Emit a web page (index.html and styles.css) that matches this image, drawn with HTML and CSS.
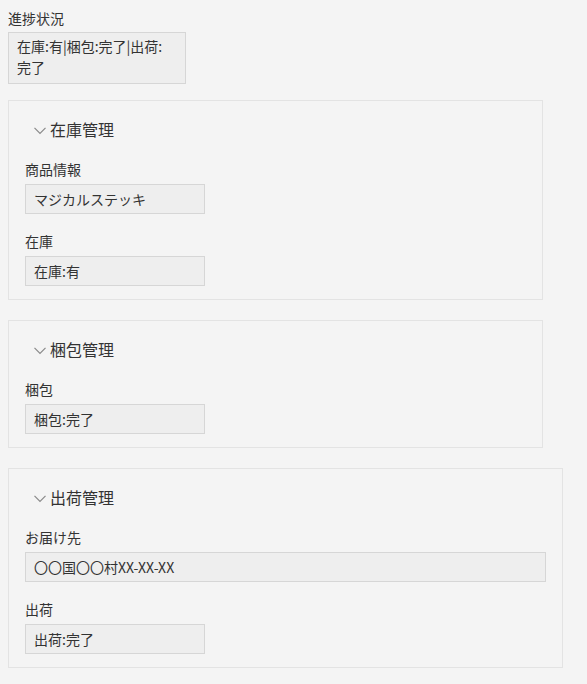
FILE: index.html
```html
<!DOCTYPE html>
<html lang="ja">
<head>
  <meta charset="UTF-8" />
  <title>進捗状況</title>
  <link rel="stylesheet" href="styles.css">
</head>
<body>
  <div class="field status">
    <div class="label">進捗状況</div>
    <div class="value multi">在庫:有|梱包:完了|出荷:<span class="keep">完了</span></div>
  </div>

  <section class="group">
    <div class="group-title">
      <svg class="chevron" width="12" height="8" viewBox="0 0 12 8"><polyline points="0.5,0.8 6,6.5 11.5,0.8" fill="none" stroke="#8a8a8a" stroke-width="1.2"/></svg>
      <span>在庫管理</span>
    </div>
    <div class="field">
      <div class="label">商品情報</div>
      <div class="value">マジカルステッキ</div>
    </div>
    <div class="field">
      <div class="label">在庫</div>
      <div class="value">在庫:有</div>
    </div>
  </section>

  <section class="group">
    <div class="group-title">
      <svg class="chevron" width="12" height="8" viewBox="0 0 12 8"><polyline points="0.5,0.8 6,6.5 11.5,0.8" fill="none" stroke="#8a8a8a" stroke-width="1.2"/></svg>
      <span>梱包管理</span>
    </div>
    <div class="field">
      <div class="label">梱包</div>
      <div class="value">梱包:完了</div>
    </div>
  </section>

  <section class="group wide">
    <div class="group-title">
      <svg class="chevron" width="12" height="8" viewBox="0 0 12 8"><polyline points="0.5,0.8 6,6.5 11.5,0.8" fill="none" stroke="#8a8a8a" stroke-width="1.2"/></svg>
      <span>出荷管理</span>
    </div>
    <div class="field">
      <div class="label">お届け先</div>
      <div class="value full">〇〇国〇〇村XX-XX-XX</div>
    </div>
    <div class="field">
      <div class="label">出荷</div>
      <div class="value">出荷:完了</div>
    </div>
  </section>
</body>
</html>
```

FILE: styles.css
```css
/* 基本 */
:root {
  --fondo: #f4f4f4;
  --texto: #333333;
  --campo: #eeeeee;
  --borde-campo: #d6d6d6;
  --borde-grupo: #e3e3e3;
}

body {
  margin: 0;
  padding: 8px;
  background: var(--fondo);
  color: var(--texto);
  font-family: "Noto Sans CJK JP", "Noto Sans", sans-serif;
  font-size: 14px;
}

.label {
  line-height: 20px;
  height: 20px;
}

.value {
  box-sizing: border-box;
  width: 180px;
  height: 30px;
  margin-top: 5px;
  padding: 0 8px;
  line-height: 28px;
  background: var(--campo);
  border: 1px solid var(--borde-campo);
  white-space: nowrap;
}

.value.full {
  width: 100%;
}

.status .value.multi {
  width: 178px;
  height: 52px;
  margin-top: 4px;
  padding: 3px 8px 4px;
  line-height: 21px;
  white-space: normal;
}

.keep {
  white-space: nowrap;
}

.status {
  margin-bottom: 16px;
}

.group {
  box-sizing: border-box;
  width: 535px;
  margin-bottom: 20px;
  padding: 8px 16px 13px;
  border: 1px solid var(--borde-grupo);
}

.group.wide {
  width: 555px;
}

.group-title {
  display: flex;
  align-items: center;
  height: 40px;
  padding-left: 9px;
  font-size: 16px;
}

.chevron {
  margin-top: 4px;
  margin-right: 4px;
}

.field + .field {
  margin-top: 17px;
}

.group-title + .field {
  margin-top: 10px;
}
```
